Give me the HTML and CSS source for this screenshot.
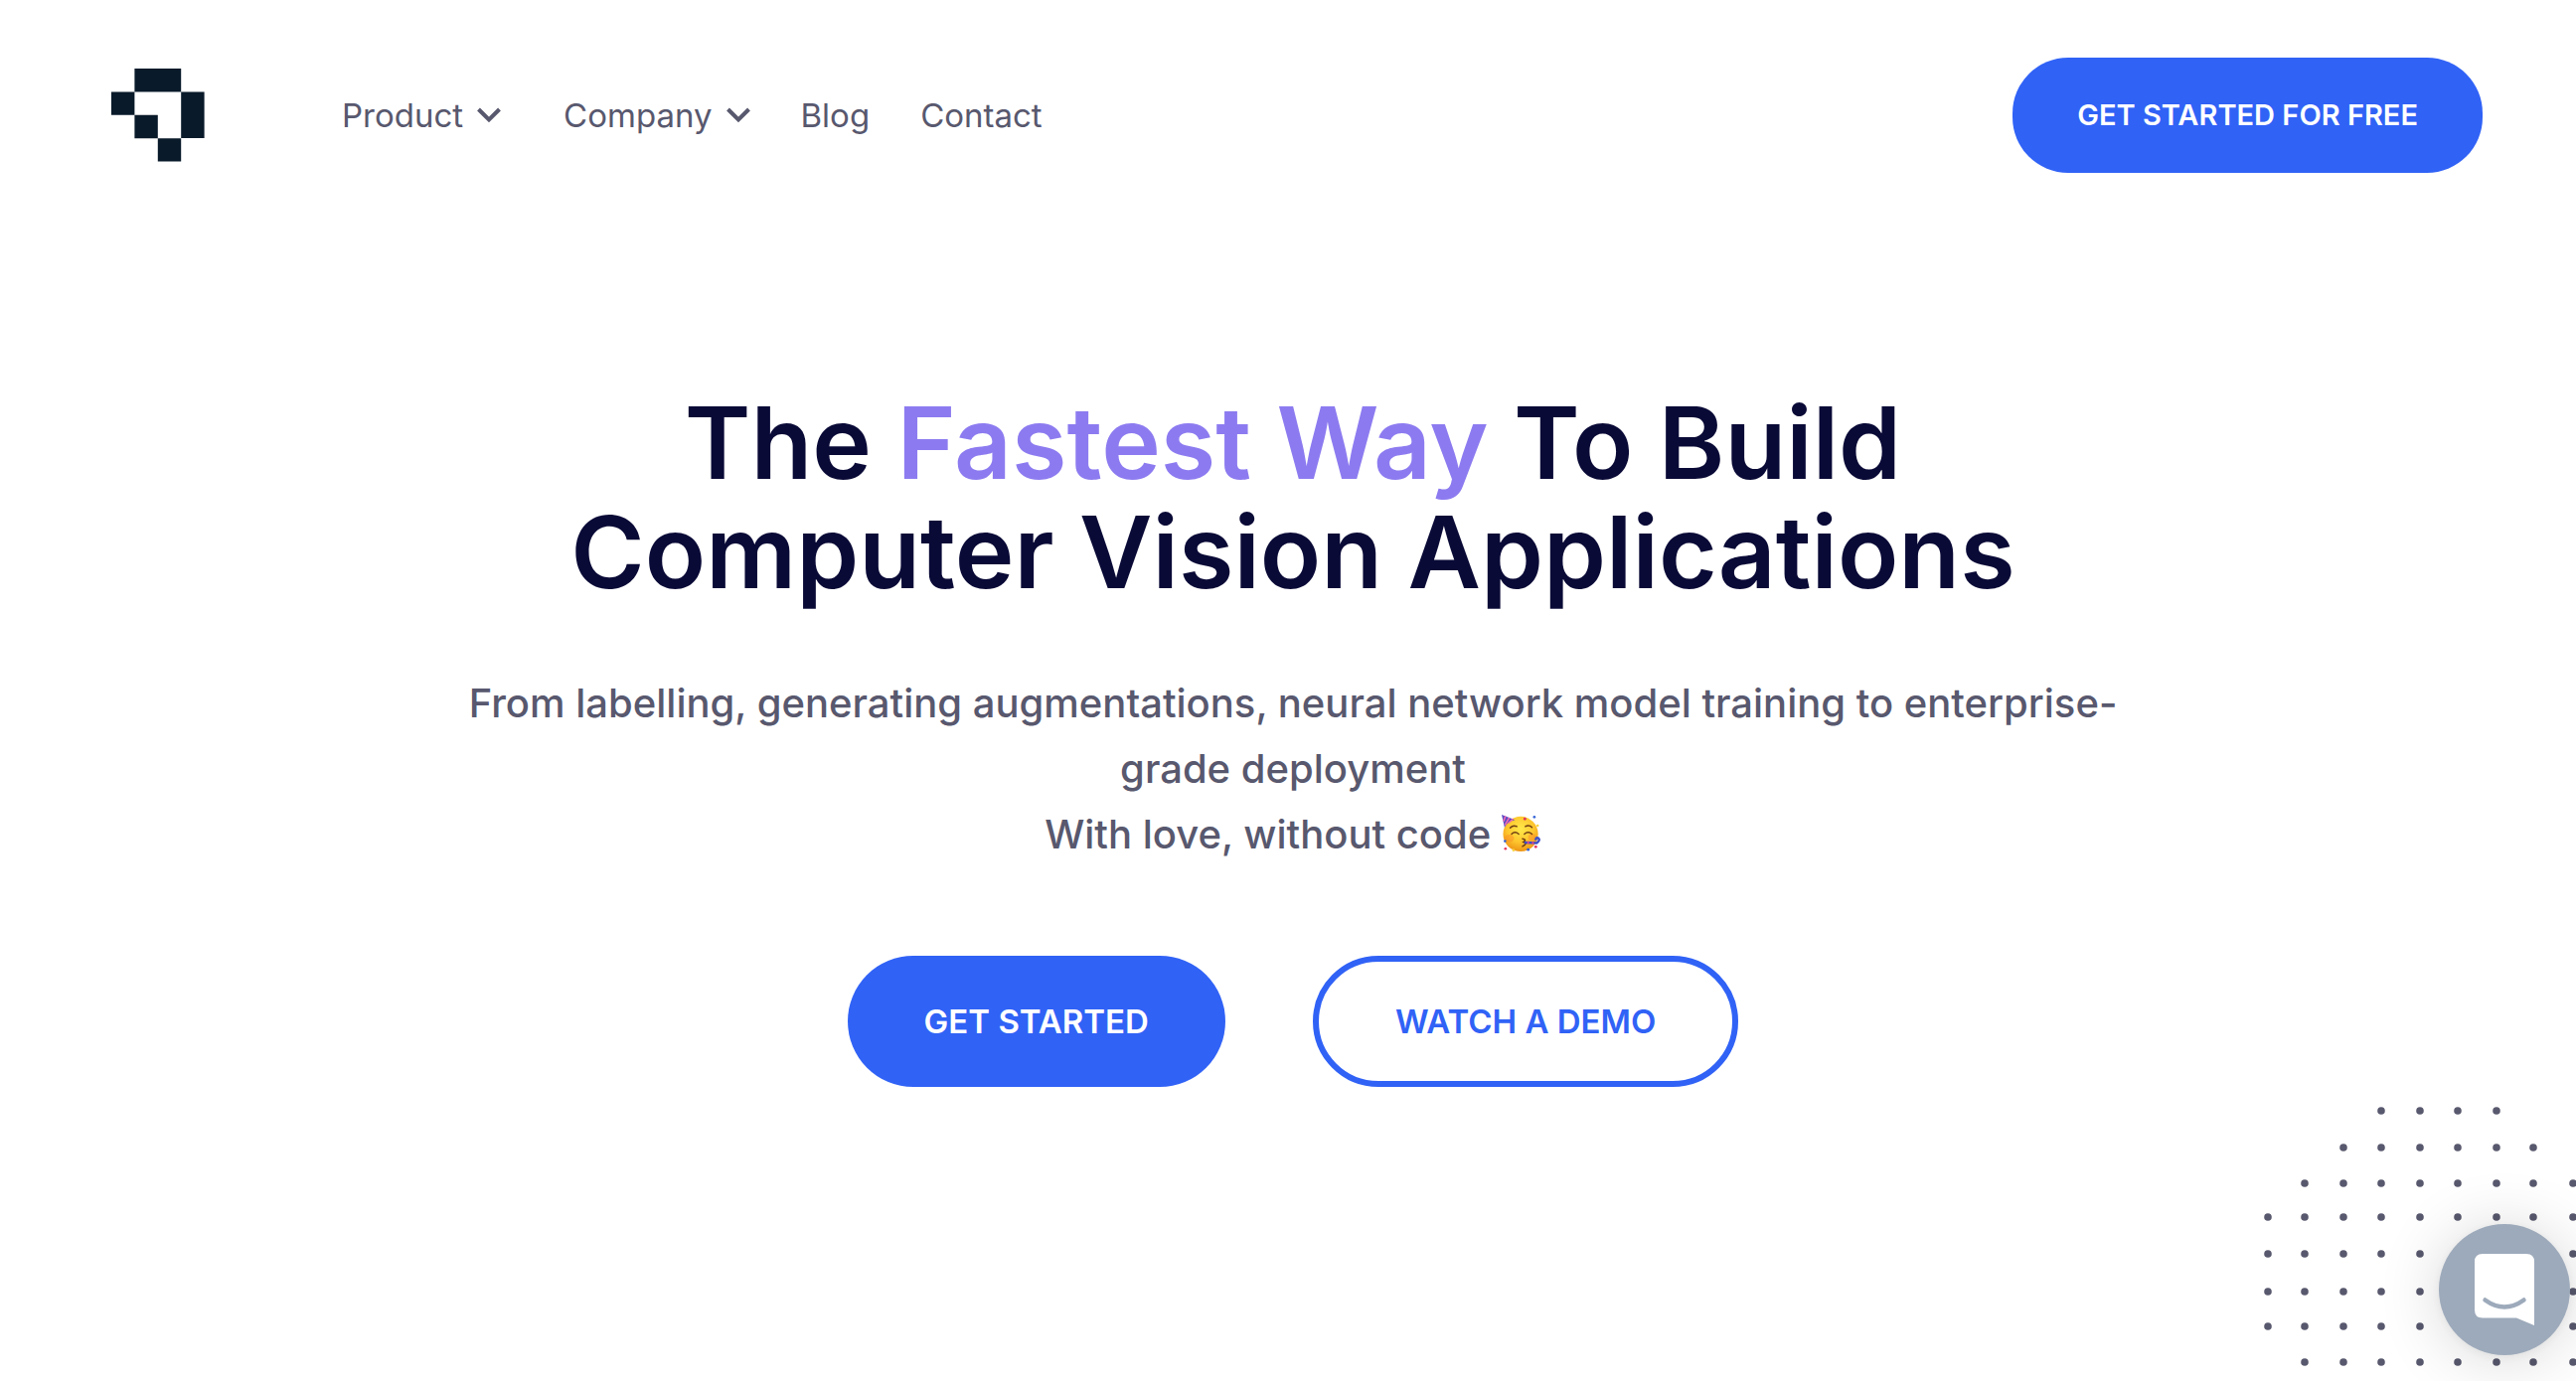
FILE: index.html
```html
<!DOCTYPE html>
<html lang="en">
<head>
  <meta charset="utf-8">
  <meta name="viewport" content="width=device-width, initial-scale=1">
  <title>The Fastest Way To Build Computer Vision Applications</title>
  <link rel="stylesheet" href="styles.css">
</head>
<body>
  <header class="site-header">
    <a class="logo" href="#" aria-label="Home">
      <svg class="logo-mark" viewBox="0 0 94 94" aria-hidden="true">
        <path fill="#091a2a" d="M23.4 0H70.2V23.4H23.4zM0 23.4H23.4V46.8H0zM70.2 23.4H93.6V70H70.2zM23.4 46.8H46.8V70.2H23.4zM46.8 70.2H70.2V93.6H46.8z"/>
      </svg>
    </a>
    <nav class="main-nav" aria-label="Main">
      <button class="nav-item nav-menu" type="button">Product
        <svg class="chevron" viewBox="0 0 24 16" aria-hidden="true"><path d="M1.500 2L12 12.500L22.500 2"/></svg>
      </button>
      <button class="nav-item nav-menu" type="button">Company
        <svg class="chevron" viewBox="0 0 24 16" aria-hidden="true"><path d="M1.500 2L12 12.500L22.500 2"/></svg>
      </button>
      <a class="nav-item" href="#">Blog</a>
      <a class="nav-item" href="#">Contact</a>
    </nav>
    <button class="btn btn-small" type="button">GET STARTED FOR FREE</button>
  </header>

  <main class="hero">
    <h1 class="hero-title">The <span class="accent">Fastest Way</span> To Build<br>Computer Vision Applications</h1>
    <p class="hero-text">From labelling, generating augmentations, neural network model training to enterprise-grade deployment<br>With love, without code
      <svg class="emoji" viewBox="0 0 42 42" role="img" aria-label="Partying face">
        <defs>
          <radialGradient id="face" cx="50%" cy="35%" r="65%">
            <stop offset="0" stop-color="#ffe94a"/>
            <stop offset="0.600" stop-color="#fdc52d"/>
            <stop offset="1" stop-color="#ee9416"/>
          </radialGradient>
        </defs>
        <circle cx="20" cy="21.500" r="18.500" fill="url(#face)"/>
        <ellipse cx="8" cy="26" rx="5" ry="4" fill="#fb8a2b" opacity="0.450"/>
        <ellipse cx="32" cy="25" rx="4" ry="4" fill="#fb8a2b" opacity="0.450"/>
        <path d="M0 1L14 6.500Q6 8 3 14.500z" fill="#5b4bc4"/>
        <path d="M4 2.500L2 8M8 4L3.500 12M12 5.500L7 10" stroke="#f06ab4" stroke-width="1.600" fill="none"/>
        <path d="M9 15Q12 11.500 16 13.500M25 13.500Q29 11.500 32 14.500M10.500 21.500Q14 18 18 21.500M24 21.500Q28 18 32 21.500" stroke="#6d3b12" stroke-width="1.500" stroke-linecap="round" fill="none"/>
        <path d="M22 26.500Q27 27.500 23 30Q28 31.500 22 34.500" stroke="#6d3b12" stroke-width="1.600" stroke-linecap="round" fill="none"/>
        <path d="M24 30.500L37 31Q41 28 39 26Q36 24.500 36 28" stroke="#3d4fc6" stroke-width="2.600" fill="none"/>
        <path d="M27 30.500H29M32 31H34" stroke="#e0458f" stroke-width="2.600"/>
        <g fill="#e2345c"><circle cx="24.500" cy="5.500" r="1.500"/><circle cx="36" cy="35" r="1.500"/><circle cx="4" cy="37" r="1.400"/></g>
        <g fill="#3564d6"><circle cx="34.500" cy="3.500" r="1.400"/><circle cx="3.500" cy="29" r="1.400"/><circle cx="28" cy="38" r="1.500"/></g>
        <g fill="#f6d23c"><circle cx="38" cy="12.500" r="1.300"/><circle cx="12.500" cy="38.500" r="1.400"/></g>
      </svg>
    </p>
    <div class="hero-actions">
      <button class="btn btn-large" type="button">GET STARTED</button>
      <button class="btn btn-large btn-outline" type="button">WATCH A DEMO</button>
    </div>
  </main>

  <svg class="dots" viewBox="0 0 320 280" aria-hidden="true">
    <defs>
      <g id="column-wide"><circle cx="0" cy="115" r="3.800"/><circle cx="0" cy="152" r="3.800"/><circle cx="0" cy="190" r="3.800"/><circle cx="0" cy="225" r="3.800"/></g>
      <g id="column-low"><use href="#column-wide"/><circle cx="0" cy="81" r="3.800"/><circle cx="0" cy="261" r="3.800"/></g>
      <g id="column-mid"><use href="#column-low"/><circle cx="0" cy="45" r="3.800"/></g>
      <g id="column-full"><use href="#column-mid"/><circle cx="0" cy="8" r="3.800"/></g>
    </defs>
    <g fill="#58586e">
      <use href="#column-wide" x="10"/>
      <use href="#column-low" x="47"/>
      <use href="#column-mid" x="86"/>
      <use href="#column-full" x="124"/>
      <use href="#column-full" x="163"/>
      <use href="#column-full" x="201"/>
      <use href="#column-full" x="240"/>
      <use href="#column-mid" x="277"/>
      <use href="#column-low" x="317"/>
    </g>
  </svg>

  <button class="chat-launcher" type="button" aria-label="Open chat">
    <svg class="chat-icon" viewBox="0 0 60 72" aria-hidden="true">
      <path fill="#fff" d="M8 0H52Q60 0 60 8V72L42 64.500H8Q0 64.500 0 56.500V8Q0 0 8 0z"/>
      <path d="M10.500 46.500Q30 60.500 49.500 46.500" fill="none" stroke="#9daabb" stroke-width="4.500" stroke-linecap="round"/>
    </svg>
  </button>
</body>
</html>
```
FILE: styles.css
```css
* {
  box-sizing: border-box;
}

body {
  position: relative;
  min-height: 100vh;
  margin: 0;
  overflow-x: hidden;
  background: #fff;
  color: #58586e;
  font-family: Inter, "Liberation Sans", sans-serif;
}

button {
  margin: 0;
  padding: 0;
  border: 0;
  background: none;
  color: inherit;
  font: inherit;
  cursor: pointer;
}

a {
  color: inherit;
  text-decoration: none;
}

.site-header {
  display: flex;
  align-items: center;
  padding: 58px 94px 0 112px;
}

.logo,
.logo-mark {
  display: block;
  width: 94px;
  height: 94px;
}

.main-nav {
  display: flex;
  align-items: center;
  gap: 51px;
  margin: 0 auto 0 138px;
}

.nav-item {
  font-size: 33px;
  line-height: 48px;
}

.nav-menu {
  display: flex;
  align-items: center;
  gap: 14px;
}

.nav-menu:first-child {
  padding-right: 12px;
}

.chevron {
  width: 24px;
  height: 16px;
  fill: none;
  stroke: #58586e;
  stroke-width: 4px;
}

.btn {
  border-radius: 66px;
  background: #3062f6;
  color: #fff;
  font-weight: 600;
}

.btn-small {
  padding: 0 65px;
  border-radius: 56px;
  font-size: 29px;
  line-height: 116px;
}

.hero {
  display: flex;
  flex-direction: column;
  align-items: center;
  padding: 216px 0 60px 10px;
  text-align: center;
}

.hero-title {
  margin: 0;
  color: #0a0a37;
  font-size: 101px;
  font-weight: 600;
  line-height: 110px;
}

.accent {
  color: #8c7bf0;
}

.hero-text {
  max-width: 1680px;
  margin: 65px 0 0;
  font-size: 40px;
  font-weight: 500;
  line-height: 66px;
}

.emoji {
  width: 40px;
  height: 40px;
  vertical-align: -5px;
}

.hero-actions {
  display: flex;
  gap: 88px;
  margin-top: 89px;
}

.btn-large {
  padding: 0 77px;
  font-size: 33px;
  line-height: 132px;
}

.btn-outline {
  border: 6px solid #3062f6;
  background: #fff;
  color: #3062f6;
  line-height: 120px;
}

.dots {
  position: absolute;
  right: 0;
  bottom: 0;
  width: 320px;
  height: 280px;
}

.chat-launcher {
  position: fixed;
  right: 6px;
  bottom: 26px;
  display: grid;
  place-items: center;
  width: 132px;
  height: 132px;
  border-radius: 50%;
  background: #9daabb;
  box-shadow: 0 2px 12px rgba(0, 0, 0, 0.06), 0 4px 64px rgba(0, 0, 0, 0.16);
}

.chat-icon {
  width: 60px;
  height: 72px;
}
```
